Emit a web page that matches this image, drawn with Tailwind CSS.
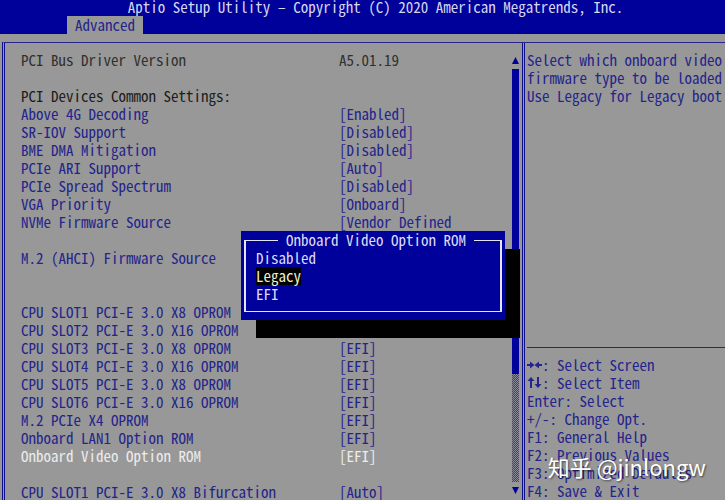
<!DOCTYPE html>
<html lang="en">

<head>
  <meta charset="UTF-8">
  <meta name="viewport" content="width=device-width, initial-scale=1.0">
  <title>Aptio Setup Utility</title>
  <script src="https://cdn.jsdelivr.net/npm/@tailwindcss/browser@4"></script>
</head>

<body class="bg-[#989898] text-[#24248c] font-['Noto_Sans_Mono_CJK_SC','Liberation_Mono',monospace] text-[15px] leading-[18px] whitespace-nowrap">
  <div class="relative flex flex-col h-screen overflow-hidden">

    <!-- Header -->
    <header class="bg-[#00009a] shrink-0">
      <h1 class="pl-[26px] h-4 leading-[14px] text-center text-[#d6d6ee]">Aptio Setup Utility – Copyright (C) 2020 American Megatrends, Inc.</h1>
      <nav class="flex pl-[67px]">
        <a href="#" class="bg-[#989898] px-2 h-[18px]">Advanced</a>
      </nav>
    </header>

    <main class="flex-1 min-h-0 mt-2 ml-[2px] grid grid-cols-[1fr_203px] border-t border-l-3 border-t-[#24248c] [border-left-style:double] border-l-[#10108c]">

      <!-- Settings -->
      <section class="flex min-h-0 pt-2 pl-4 pr-[3px]">
        <div class="flex-1">
          <table class="table-fixed w-full text-left">
            <colgroup>
              <col class="w-[318px]">
              <col>
            </colgroup>
            <tbody>
              <tr class="h-[18px] text-[#303030]"><td>PCI Bus Driver Version</td><td>A5.01.19</td></tr>
              <tr class="h-[18px]"><td colspan="2"></td></tr>
              <tr class="h-[18px] text-[#1c1c1c]"><th colspan="2" class="font-normal">PCI Devices Common Settings:</th></tr>
              <tr class="h-[18px]"><td>Above 4G Decoding</td><td><button class="block">[Enabled]</button></td></tr>
              <tr class="h-[18px]"><td>SR-IOV Support</td><td><button class="block">[Disabled]</button></td></tr>
              <tr class="h-[18px]"><td>BME DMA Mitigation</td><td><button class="block">[Disabled]</button></td></tr>
              <tr class="h-[18px]"><td>PCIe ARI Support</td><td><button class="block">[Auto]</button></td></tr>
              <tr class="h-[18px]"><td>PCIe Spread Spectrum</td><td><button class="block">[Disabled]</button></td></tr>
              <tr class="h-[18px]"><td>VGA Priority</td><td><button class="block">[Onboard]</button></td></tr>
              <tr class="h-[18px]"><td>NVMe Firmware Source</td><td><button class="block">[Vendor Defined</button></td></tr>
              <tr class="h-[18px]"><td colspan="2"></td></tr>
              <tr class="h-[18px]"><td>M.2 (AHCI) Firmware Source</td><td></td></tr>
              <tr class="h-[36px]"><td colspan="2"></td></tr>
              <tr class="h-[18px]"><td>CPU SLOT1 PCI-E 3.0 X8 OPROM</td><td></td></tr>
              <tr class="h-[18px]"><td>CPU SLOT2 PCI-E 3.0 X16 OPROM</td><td></td></tr>
              <tr class="h-[18px]"><td>CPU SLOT3 PCI-E 3.0 X8 OPROM</td><td><button class="block">[EFI]</button></td></tr>
              <tr class="h-[18px]"><td>CPU SLOT4 PCI-E 3.0 X16 OPROM</td><td><button class="block">[EFI]</button></td></tr>
              <tr class="h-[18px]"><td>CPU SLOT5 PCI-E 3.0 X8 OPROM</td><td><button class="block">[EFI]</button></td></tr>
              <tr class="h-[18px]"><td>CPU SLOT6 PCI-E 3.0 X16 OPROM</td><td><button class="block">[EFI]</button></td></tr>
              <tr class="h-[18px]"><td>M.2 PCIe X4 OPROM</td><td><button class="block">[EFI]</button></td></tr>
              <tr class="h-[18px]"><td>Onboard LAN1 Option ROM</td><td><button class="block">[EFI]</button></td></tr>
              <tr class="h-[18px] text-[#ececec]"><td>Onboard Video Option ROM</td><td><button class="block">[EFI]</button></td></tr>
              <tr class="h-[18px]"><td colspan="2"></td></tr>
              <tr class="h-[18px]"><td>CPU SLOT1 PCI-E 3.0 X8 Bifurcation</td><td><button class="block">[Auto]</button></td></tr>
            </tbody>
          </table>
        </div>

        <!-- Scrollbar -->
        <div class="w-[7px] flex flex-col text-[#00009a]">
          <svg class="h-[18px] w-[7px] shrink-0" viewBox="0 0 7 18" fill="currentColor"><path d="M3.5 6 7 13H0z" /></svg>
          <div class="flex-[17] bg-[#00009a]"></div>
          <div class="flex-[6] bg-[#8a8a98] bg-[conic-gradient(#3c3c90_25%,transparent_25%_50%,#3c3c90_50%_75%,transparent_75%)] bg-size-[2px_2px]"></div>
          <svg class="h-[18px] w-[7px] shrink-0" viewBox="0 0 7 18" fill="currentColor"><path d="M0 5H7L3.5 12z" /></svg>
        </div>
      </section>

      <!-- Help -->
      <aside class="flex flex-col min-h-0 pt-2 pl-[2px] border-l-3 border-double border-[#10108c]">
        <p>Select which onboard video<br>firmware type to be loaded<br>Use Legacy for Legacy boot</p>
        <ul class="mt-auto pt-2 border-t border-[#24248c]">
          <li class="flex"><svg class="w-[15px] h-[18px]" viewBox="0 0 15 18" fill="currentColor"><path d="M0 8h3V5.500L7.500 9 3 12.500V10H0zM15 8h-3V5.500L7.500 9l4.500 3.500V10h3z" /></svg>: Select Screen</li>
          <li class="flex"><svg class="w-[15px] h-[18px]" viewBox="0 0 15 18" fill="currentColor"><path d="M4 3 7.500 7H5v7H3V7H.5zM11 14l3.500-4H12V3h-2v7H7.500z" /></svg>: Select Item</li>
          <li>Enter: Select</li>
          <li>+/-: Change Opt.</li>
          <li>F1: General Help</li>
          <li>F2: Previous Values</li>
          <li>F3: Optimized Defaults</li>
          <li>F4: Save &amp; Exit</li>
        </ul>
      </aside>
    </main>

    <!-- Option popup -->
    <div role="dialog" aria-label="Onboard Video Option ROM" class="absolute left-[241px] top-[231px] w-[264px] px-[3px] pb-2 bg-[#00009a] text-[#dcdcf4] shadow-[15px_18px_0_#000]">
      <fieldset class="border-x-2 border-y border-[#e4e4f8] pb-2 pl-[10px] flex flex-col items-start">
        <legend class="ml-[22px] px-2">Onboard Video Option ROM</legend>
        <button>Disabled</button>
        <button class="bg-black text-[#f0f0c8]">Legacy</button>
        <button>EFI</button>
      </fieldset>
    </div>

    <!-- Watermark -->
    <div class="absolute right-[19px] bottom-[18px] text-[22px] leading-8 text-white font-['Noto_Sans_CJK_SC',sans-serif] text-shadow-[1px_1px_2px_#0008]" lang="zh">知乎 @jinlongw</div>
  </div>
</body>

</html>
